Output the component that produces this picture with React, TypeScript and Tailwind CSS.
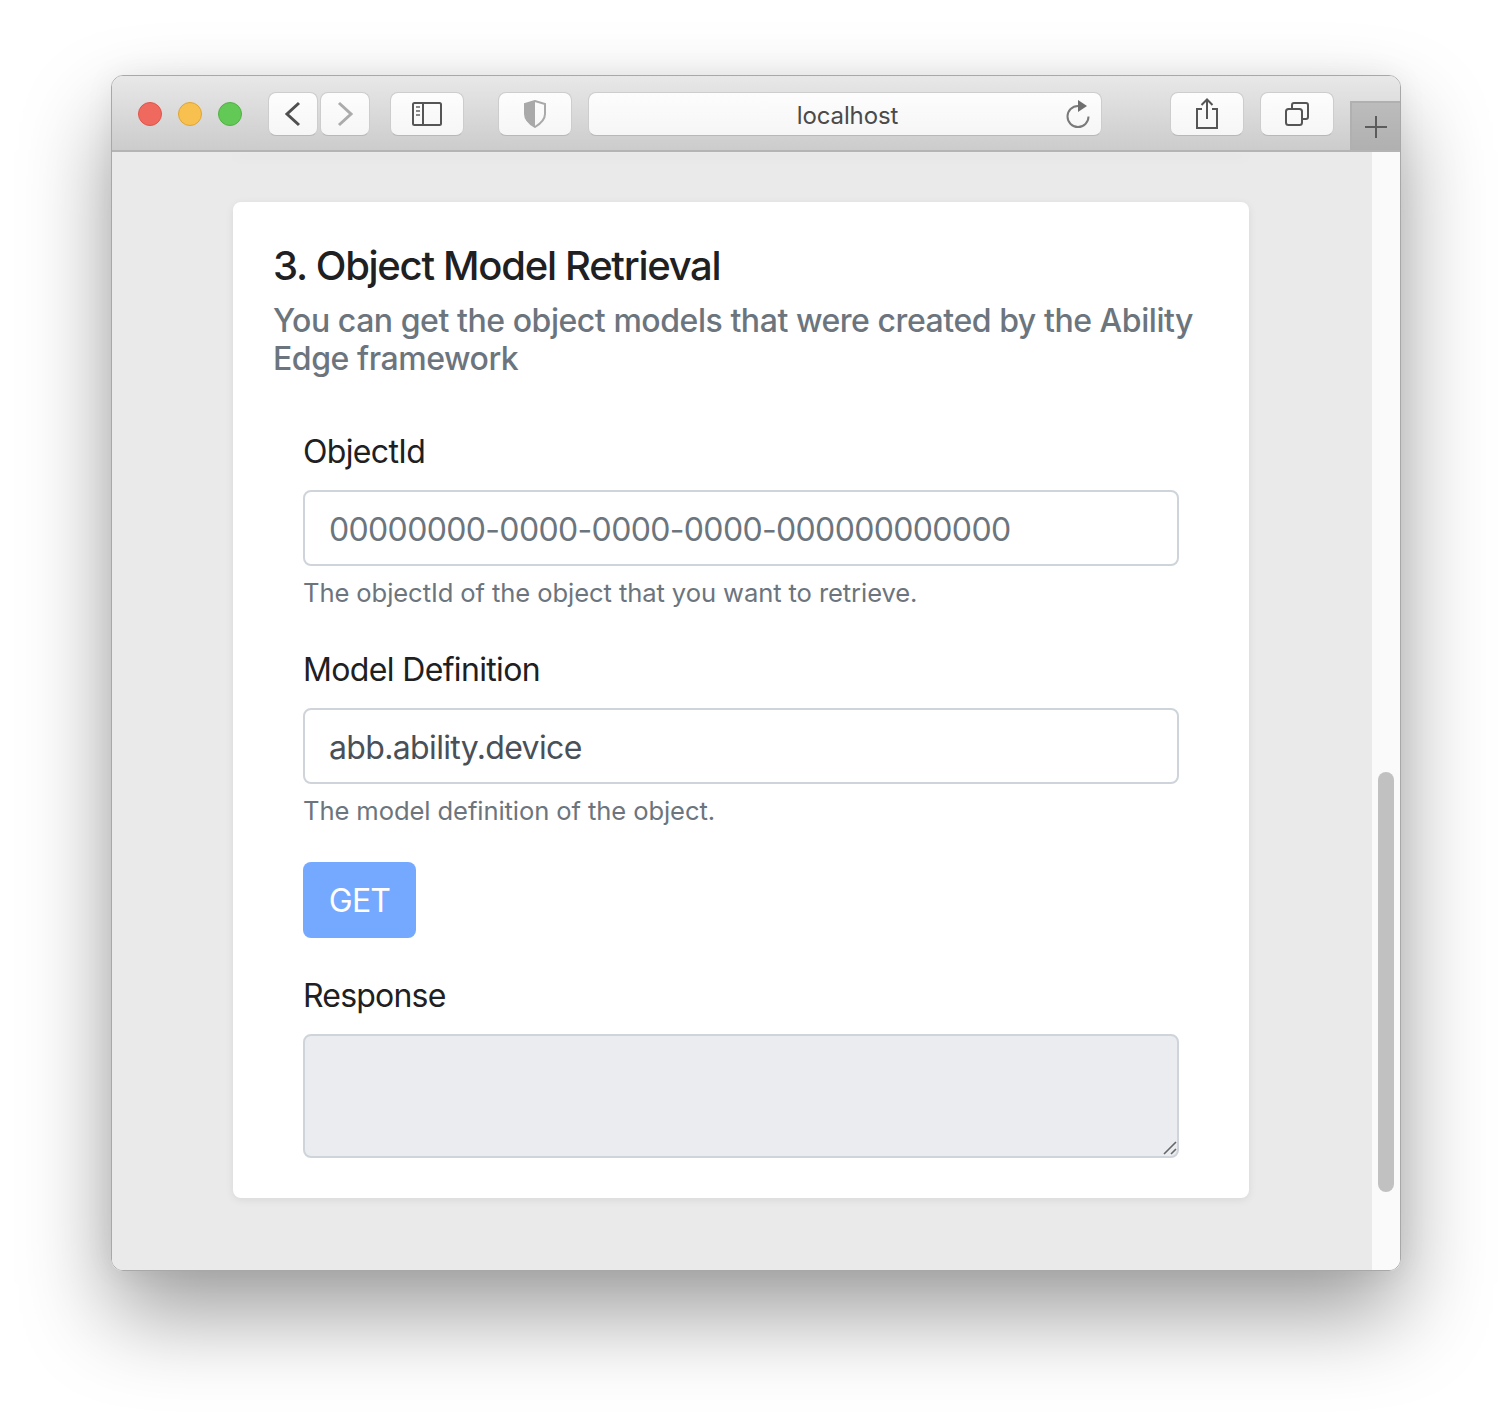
const font = { fontFamily: 'Inter, "Noto Sans", sans-serif' };

function ToolButton({ className, children }: { className: string; children?: React.ReactNode }) {
  return (
    <div className={`flex h-[44px] shrink-0 items-center justify-center rounded-[8px] border border-[#cdcdcd] border-b-[#b8b8b8] bg-gradient-to-b from-[#fdfdfd] to-[#f6f6f6] ${className}`}>
      {children}
    </div>
  );
}

function Field({ label, value, placeholder, help }: { label: string; value?: string; placeholder?: string; help: string }) {
  return (
    <div className="flex flex-col">
      <label className="h-[48px] pt-[2px] text-[32px] leading-[48px] tracking-[-0.65px] text-[#1e2022]">{label}</label>
      <input
        readOnly
        value={value}
        placeholder={placeholder}
        className="mt-[16px] h-[76px] w-full rounded-[8px] border-2 border-[#ced4da] bg-white px-[24px] pt-[3px] text-[32px] tracking-[-0.65px] text-[#495057] outline-none placeholder:text-[#6c757d]"
        style={font}
      />
      <p className="mt-[8px] text-[25.6px] leading-[38px] tracking-[-0.1px] text-[#6c757d]">{help}</p>
    </div>
  );
}

export default function App() {
  return (
    <div className="h-[1418px] w-[1512px] overflow-hidden bg-white pl-[111px] pt-[75px]" style={font}>
      <div className="flex h-[1196px] w-[1290px] flex-col overflow-hidden rounded-[12px] border border-[#a8a8a8] shadow-[0_44px_88px_rgba(0,0,0,0.38),0_0_30px_rgba(0,0,0,0.06)]">
        {/* toolbar */}
        <div className="relative z-10 flex h-[76px] shrink-0 items-start border-b-2 border-[#b4b4b4] bg-gradient-to-b from-[#e8e8e8] to-[#cccccc] pl-[26px]">
          <div className="mt-[26px] flex shrink-0 gap-[16px]">
            <span className="h-[24px] w-[24px] rounded-full border border-[#e0544c] bg-[#f0695f]" />
            <span className="h-[24px] w-[24px] rounded-full border border-[#dfa531] bg-[#f8c14f]" />
            <span className="h-[24px] w-[24px] rounded-full border border-[#52b044] bg-[#62c956]" />
          </div>
          <div className="ml-[26px] mt-[16px] flex shrink-0 gap-[2px]">
            <ToolButton className="w-[50px]">
              <svg width="20" height="26" viewBox="0 0 20 26" fill="none" stroke="#4f4f4f" strokeWidth="3">
                <path d="M16 2 4 13l12 11" />
              </svg>
            </ToolButton>
            <ToolButton className="w-[50px]">
              <svg width="20" height="26" viewBox="0 0 20 26" fill="none" stroke="#ababab" strokeWidth="3">
                <path d="M4 2l12 11L4 24" />
              </svg>
            </ToolButton>
          </div>
          <ToolButton className="ml-[20px] mt-[16px] w-[74px]">
            <svg width="30" height="24" viewBox="0 0 30 24" fill="none">
              <rect x="1" y="1" width="28" height="22" rx="1.5" stroke="#555" strokeWidth="2" />
              <path d="M11 1v22" stroke="#555" strokeWidth="2" />
              <path d="M4 5h4M4 9h4M4 13h4" stroke="#888" strokeWidth="2" />
            </svg>
          </ToolButton>
          <ToolButton className="ml-[34px] mt-[16px] w-[74px]">
            <svg width="24" height="28" viewBox="0 0 24 28">
              <path d="M12 1 2 4v10c0 6 5 10 10 13 5-3 10-7 10-13V4z" fill="none" stroke="#a9a9a9" strokeWidth="2" />
              <path d="M12 1 2 4v10c0 6 5 10 10 13z" fill="#a9a9a9" />
            </svg>
          </ToolButton>
          <ToolButton className="relative ml-[16px] mt-[16px] w-[514px]">
            <span className="ml-[5px] pt-[3px] text-[24px] tracking-[-0.1px] text-[#4a4a4a]">localhost</span>
            <svg className="absolute right-[10px] top-[6px]" width="26" height="30" viewBox="0 0 26 30" fill="none">
              <path d="M13 7a10.5 10.5 0 1 0 10.5 10.5" stroke="#7a7a7a" strokeWidth="2" />
              <path d="M13 1v12l9-6z" fill="#6f6f6f" />
            </svg>
          </ToolButton>
          <ToolButton className="ml-[68px] mt-[16px] w-[74px]">
            <svg width="24" height="32" viewBox="0 0 24 32" fill="none" stroke="#555" strokeWidth="2">
              <path d="M7 11H2v19h20V11h-5" />
              <path d="M12 21V2M6.5 7 12 1.5 17.5 7" />
            </svg>
          </ToolButton>
          <ToolButton className="ml-[16px] mt-[16px] w-[74px]">
            <svg width="24" height="24" viewBox="0 0 24 24" fill="none" stroke="#555" strokeWidth="2">
              <rect x="1" y="7" width="16" height="16" rx="2.5" />
              <path d="M7 6V3a2 2 0 0 1 2-2h12a2 2 0 0 1 2 2v12a2 2 0 0 1-2 2h-3" />
            </svg>
          </ToolButton>
          <div className="ml-[16px] mt-[25px] flex h-[49px] w-[50px] shrink-0 items-center justify-center border-l-2 border-t-2 border-[#b0b0b0] bg-gradient-to-b from-[#bcbcbc] to-[#b0b0b0]">
            <svg width="24" height="24" viewBox="0 0 24 24" stroke="#5c5c5c" strokeWidth="2">
              <path d="M12 1v22M1 12h22" />
            </svg>
          </div>
        </div>

        {/* body */}
        <div className="flex min-h-0 flex-1">
          <div className="flex w-[1260px] shrink-0 flex-col bg-[#eaeaea] pl-[121px]">
            <div className="h-[1px] w-[1016px] shadow-[0_4px_12px_rgba(0,0,0,0.12)]" />
            <div className="mt-[49px] flex h-[996px] w-[1016px] flex-col rounded-[8px] bg-white px-[40px] pt-[40px] shadow-[0_2px_8px_rgba(0,0,0,0.08)]">
              <h2 className="text-[40px] font-medium leading-[48px] tracking-[-1.28px] text-[#1e2022]">3. Object Model Retrieval</h2>
              <p className="mt-[12px] text-[32px] font-medium leading-[38.4px] tracking-[-0.45px] text-[#6c757d]">
                You can get the object models that were created by the Ability Edge framework
              </p>
              <div className="mx-[30px] mt-[47px] flex flex-col">
                <Field label="ObjectId" placeholder="00000000-0000-0000-0000-000000000000" help="The objectId of the object that you want to retrieve." />
                <div className="mt-[32px]">
                  <Field label="Model Definition" value="abb.ability.device" help="The model definition of the object." />
                </div>
                <button className="mt-[32px] h-[76px] w-[113px] rounded-[8px] bg-[#75a8ff] pt-[3px] text-[32px] tracking-[-0.8px] text-white">GET</button>
                <label className="mt-[32px] h-[48px] pt-[2px] text-[32px] leading-[48px] tracking-[-0.8px] text-[#1e2022]">Response</label>
                <div className="relative mt-[16px] flex">
                  <textarea
                    disabled
                    className="h-[124px] w-full resize-none rounded-[8px] border-2 border-[#ced4da] bg-[#eaecf0]"
                  />
                  <svg className="absolute bottom-[3px] right-[2px]" width="14" height="14" viewBox="0 0 14 14" stroke="#666" strokeWidth="1.6">
                    <path d="M1 13 13 1M8 13l5-5" />
                  </svg>
                </div>
              </div>
            </div>
          </div>
          <div className="relative flex-1 bg-[#fafafa]">
            <div className="absolute left-[6px] top-[620px] h-[420px] w-[16px] rounded-full bg-[#c1c1c1]" />
          </div>
        </div>
      </div>
    </div>
  );
}
